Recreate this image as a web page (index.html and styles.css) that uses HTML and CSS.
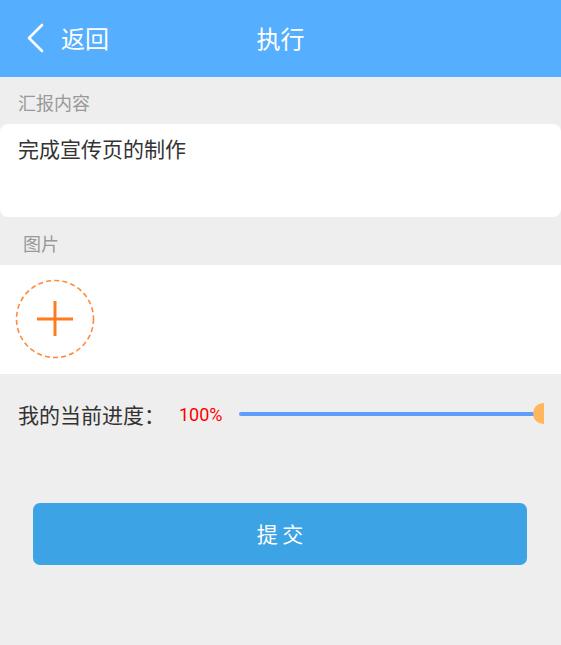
FILE: index.html
```html
<!DOCTYPE html>
<html lang="zh">
<head>
<meta charset="utf-8">
<title>执行</title>
<link rel="stylesheet" href="styles.css">
</head>
<body>
<div class="page">
  <header class="topbar">
    <div class="back">
      <svg class="chev" width="20" height="30" viewBox="0 0 20 30"><path d="M17 2 L4 15 L17 28" fill="none" stroke="#fff" stroke-width="2.6" stroke-linecap="round" stroke-linejoin="round"/></svg>
      <span class="back-text">返回</span>
    </div>
    <div class="title">执行</div>
    <div></div>
  </header>

  <div class="section-label">汇报内容</div>
  <div class="report-card">完成宣传页的制作</div>

  <div class="section-label label-photo">图片</div>
  <div class="photo-area">
    <svg class="add" width="80" height="80" viewBox="0 0 80 80">
      <circle cx="40" cy="40" r="38.5" fill="none" stroke="#ff8a3a" stroke-width="1.6" stroke-dasharray="5 3.2"/>
      <path d="M22 40 H58 M40 22 V57" stroke="#ff7a1f" stroke-width="3" fill="none"/>
    </svg>
  </div>

  <div class="progress-row">
    <span class="progress-label">我的当前进度：</span>
    <span class="progress-value">100%</span>
    <div class="slider">
      <div class="track"></div>
      <div class="thumb"></div>
    </div>
  </div>

  <div class="btn-wrap">
    <button class="submit">提 交</button>
  </div>
</div>
</body>
</html>
```

FILE: styles.css
```css
* { box-sizing: border-box; }
html, body { margin: 0; padding: 0; }
body {
  background: #eeeeee;
  font-family: "Noto Sans CJK SC", "Noto Sans", sans-serif;
  width: 561px;
  height: 645px;
  overflow: hidden;
}
.topbar {
  height: 77px;
  background: #55aefe;
  display: grid;
  grid-template-columns: 1fr auto 1fr;
  align-items: center;
  color: #fff;
}
.back {
  display: flex;
  align-items: center;
  padding-left: 25px;
  padding-bottom: 2px;
}
.chev { display: block; margin-top: 1px; }
.back-text {
  font-size: 24px;
  margin-left: 16px;
  line-height: 1;
}
.title {
  font-size: 24px;
  line-height: 1;
  padding-bottom: 2px;
}
.section-label {
  height: 47px;
  padding-left: 18px;
  display: flex;
  align-items: center;
  font-size: 18px;
  color: #999999;
  padding-top: 2px;
}
.label-photo {
  height: 48px;
  padding-left: 23px;
  padding-top: 4px;
}
.report-card {
  height: 93px;
  background: #fff;
  border-radius: 8px;
  padding: 9px 18px;
  font-size: 21px;
  line-height: 30px;
  color: #333333;
}
.photo-area {
  height: 109px;
  background: #fff;
  display: flex;
  align-items: center;
  padding-left: 15px;
  padding-bottom: 1px;
}
.add { display: block; }
.progress-row {
  height: 78px;
  display: flex;
  align-items: center;
  padding-left: 18px;
  padding-top: 2px;
}
.progress-label {
  font-size: 21px;
  color: #333333;
}
.progress-value {
  font-family: Roboto, "Noto Sans", sans-serif;
  font-size: 18px;
  color: #ff0000;
  margin-left: 14px;
}
.slider {
  position: relative;
  flex: 1;
  margin-left: 16px;
  margin-right: 17px;
  height: 22px;
  overflow: hidden;
}
.track {
  position: absolute;
  left: 0;
  right: 6px;
  top: 9px;
  height: 4px;
  border-radius: 2px;
  background: #5f9dfd;
}
.thumb {
  position: absolute;
  right: -10px;
  top: 0;
  width: 21px;
  height: 21px;
  border-radius: 50%;
  background: #ffb65c;
}
.btn-wrap {
  padding: 51px 34px 0 33px;
}
.submit {
  display: block;
  width: 100%;
  height: 62px;
  border: none;
  border-radius: 7px;
  background: #3ca3e5;
  color: #fff;
  font-family: "Noto Sans CJK SC", sans-serif;
  font-size: 21px;
  padding: 0 0 2px 0;
}
```
